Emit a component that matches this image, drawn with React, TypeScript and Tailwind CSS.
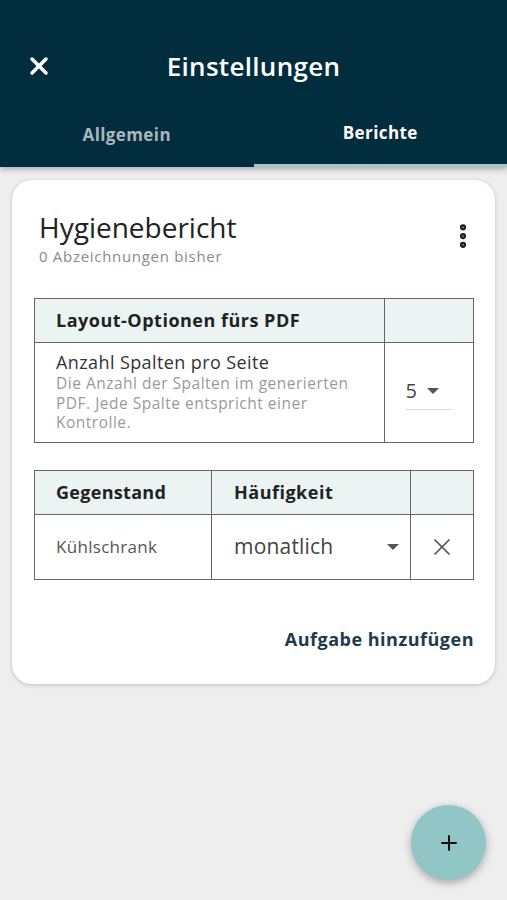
import { X, Plus, EllipsisVertical } from 'lucide-react';

function Caret() {
    return (
        <svg width="12" height="6" viewBox="0 0 12 6" className="shrink-0">
            <path d="M0 0 L12 0 L6 6 Z" fill="#555" />
        </svg>
    );
}

export default function App() {
    return (
        <div className="relative w-[507px] h-[900px] overflow-hidden bg-[#eeeeee] font-['Open_Sans',sans-serif]">
            {/* App bar */}
            <div className="bg-[#022d3e] pt-[30px] shadow-[0_2px_6px_rgba(0,0,0,0.3)] relative z-10">
                <div className="relative flex items-center justify-center h-[72px]">
                    <X className="absolute left-[25px] w-[28px] h-[28px] text-white" strokeWidth={3} />
                    <h1 className="text-white text-[26px] font-semibold tracking-[0.3px]">Einstellungen</h1>
                </div>
                <div className="flex h-[65px]">
                    <div className="flex-1 flex items-center justify-center text-[17px] font-bold tracking-[0.4px] text-[#a9b7bd]">
                        Allgemein
                    </div>
                    <div className="flex-1 flex items-center justify-center text-[17px] font-bold tracking-[0.4px] text-white border-b-[3px] border-[#9fc9cc]">
                        Berichte
                    </div>
                </div>
            </div>

            {/* Card */}
            <div className="mx-[12px] mt-[13px] bg-white rounded-[20px] shadow-[0_1px_4px_rgba(0,0,0,0.2)] pl-[22px] pr-[21px] pt-[28px] pb-[33px]">
                <div className="flex items-start justify-between pl-[5px]">
                    <div>
                        <div className="text-[28px] leading-[38px] text-[#222]">Hygienebericht</div>
                        <div className="text-[15px] leading-[20px] tracking-[0.7px] text-[#8a8a8a]">0 Abzeichnungen bisher</div>
                    </div>
                    <EllipsisVertical className="w-[30px] h-[30px] mt-[13px] -mr-[4px] text-[#222]" strokeWidth={3} />
                </div>

                {/* Layout options */}
                <div className="mt-[32px] border-[1.5px] border-[#666] grid grid-cols-[350px_1fr]">
                    <div className="h-[44px] bg-[#ebf4f3] border-b-[1.5px] border-r-[1.5px] border-[#666] flex items-center px-[21px] text-[18px] font-bold tracking-[0.5px] text-[#222]">
                        Layout-Optionen fürs PDF
                    </div>
                    <div className="h-[44px] bg-[#ebf4f3] border-b-[1.5px] border-[#666]" />
                    <div className="h-[99px] border-r-[1.5px] border-[#666] pl-[21px] pr-[8px] pt-[8px]">
                        <div className="text-[18px] leading-[23px] tracking-[0.4px] text-[#333]">Anzahl Spalten pro Seite</div>
                        <div className="text-[15.5px] leading-[19.5px] tracking-[0.5px] text-[#9a9a9a]">
                            Die Anzahl der Spalten im generierten PDF. Jede Spalte entspricht einer Kontrolle.
                        </div>
                    </div>
                    <div className="flex items-start justify-center pt-[36px]">
                        <div className="w-[47px] border-b border-[#ddd] pb-[6px] flex items-center gap-[10px]">
                            <span className="text-[20px] leading-[24px] text-[#444]">5</span>
                            <Caret />
                        </div>
                    </div>
                </div>

                {/* Tasks table */}
                <div className="mt-[27px] border-[1.5px] border-[#666] grid grid-cols-[177px_199px_1fr]">
                    <div className="h-[44px] bg-[#ebf4f3] border-b-[1.5px] border-r-[1.5px] border-[#666] flex items-center px-[21px] text-[18px] font-bold tracking-[0.3px] text-[#222]">
                        Gegenstand
                    </div>
                    <div className="h-[44px] bg-[#ebf4f3] border-b-[1.5px] border-r-[1.5px] border-[#666] flex items-center px-[22px] text-[18px] font-bold tracking-[0.5px] text-[#222]">
                        Häufigkeit
                    </div>
                    <div className="h-[44px] bg-[#ebf4f3] border-b-[1.5px] border-[#666]" />
                    <div className="h-[64px] border-r-[1.5px] border-[#666] flex items-center px-[21px] text-[17px] tracking-[0.3px] text-[#555]">
                        Kühlschrank
                    </div>
                    <div className="h-[64px] border-r-[1.5px] border-[#666] flex items-center justify-between pl-[22px] pr-[11px]">
                        <span className="text-[21px] tracking-[0.2px] text-[#444]">monatlich</span>
                        <Caret />
                    </div>
                    <div className="h-[64px] flex items-center justify-center">
                        <X className="w-[28px] h-[28px] text-[#555]" strokeWidth={1.5} />
                    </div>
                </div>

                <div className="mt-[47px] flex justify-end text-[18px] leading-[24px] font-bold tracking-[0.5px] text-[#1f3a48]">
                    Aufgabe hinzufügen
                </div>
            </div>

            {/* FAB */}
            <button className="absolute right-[21px] bottom-[20px] w-[75px] h-[75px] rounded-full bg-[#92c5c6] shadow-[0_3px_8px_rgba(0,0,0,0.3)] flex items-center justify-center">
                <Plus className="w-[24px] h-[24px] text-[#111]" strokeWidth={2} />
            </button>
        </div>
    );
}
